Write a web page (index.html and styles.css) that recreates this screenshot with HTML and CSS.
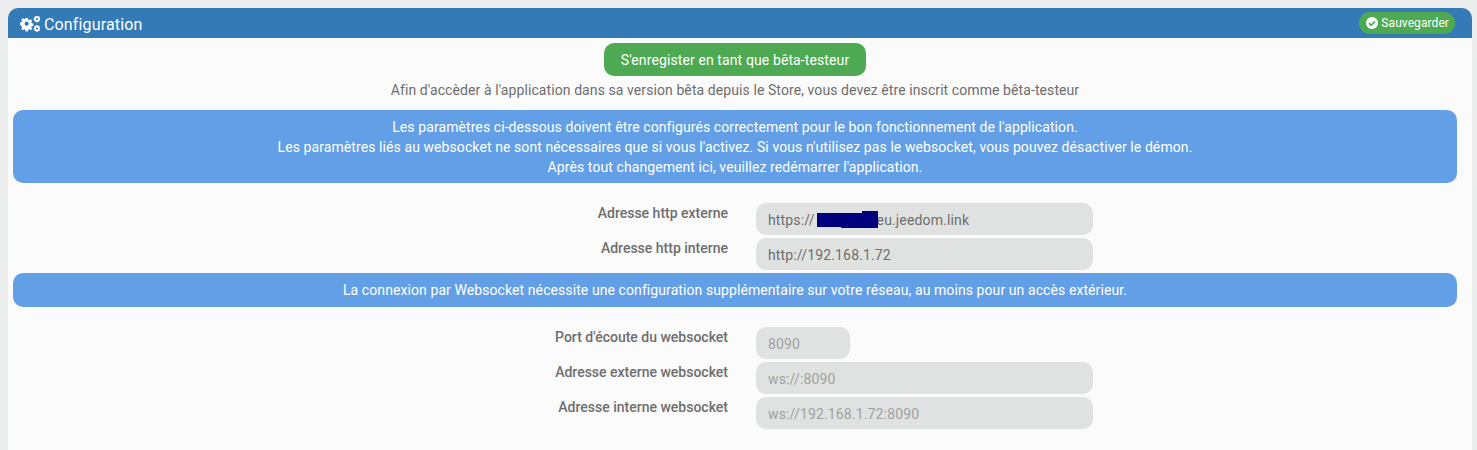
FILE: index.html
```html
<!DOCTYPE html>
<html lang="fr">
<head>
<meta charset="utf-8">
<title>Configuration</title>
<link rel="stylesheet" href="styles.css">
</head>
<body>
<main class="panel">
  <header class="panel-head">
    <h1 class="panel-title">
      <svg class="cogs" viewBox="0 0 20 16" width="20" height="16" aria-hidden="true">
        <defs>
          <path id="cog-small" fill-rule="evenodd" d="M15.300.4h1.400l.2 1 .6.3.9-.5.9.9-.5.9.3.6 1 .2v1.400l-1 .2-.3.6.5.9-.9.9-.9-.5-.6.3-.2 1h-1.400l-.2-1-.6-.3-.9.5-.9-.9.5-.9-.3-.6-1-.2V3.800l1-.2.3-.6-.5-.9.9-.9.9.5.6-.3zM16 3.200a1.300 1.300 0 1 0 0 2.600 1.300 1.300 0 0 0 0-2.600z"/>
        </defs>
        <g fill="#fff">
          <path transform="translate(-.6 -.6)" fill-rule="evenodd" d="M6.200 2.600h2.200l.4 1.700 1 .4 1.500-.9 1.500 1.500-.9 1.500.4 1 1.700.4v2.200l-1.700.4-.4 1 .9 1.500-1.500 1.500-1.500-.9-1 .4-.4 1.700H6.200l-.4-1.700-1-.4-1.500.9-1.500-1.500.9-1.500-.4-1L.6 9.400V7.200l1.700-.4.4-1-.9-1.500 1.500-1.500 1.500.9 1-.4zM7.300 6.200a2.100 2.100 0 1 0 0 4.200 2.100 2.100 0 0 0 0-4.200z"/>
          <use href="#cog-small" transform="translate(17 3) scale(.86) translate(-16 -4.500)"/>
          <use href="#cog-small" transform="translate(17 12.500) scale(.86) translate(-16 -4.500)"/>
        </g>
      </svg>
      <span class="panel-title-text">Configuration</span>
    </h1>
    <button class="save" type="button">
      <svg viewBox="0 0 12 12" width="12" height="12" aria-hidden="true">
        <circle cx="6" cy="6" r="6" fill="#fff"/>
        <path d="M3 6.200 5.100 8.300 9 4.300" fill="none" stroke="#4eaa52" stroke-width="1.700"/>
      </svg>
      Sauvegarder
    </button>
  </header>
  <div class="panel-body">
    <div class="beta">
      <button class="beta-btn" type="button">S'enregister en tant que bêta-testeur</button>
      <p class="beta-note">Afin d'accèder à l'application dans sa version bêta depuis le Store, vous devez être inscrit comme bêta-testeur</p>
    </div>
    <div class="notice">
      Les paramètres ci-dessous doivent être configurés correctement pour le bon fonctionnement de l'application.<br>
      Les paramètres liés au websocket ne sont nécessaires que si vous l'activez. Si vous n'utilisez pas le websocket, vous pouvez désactiver le démon.<br>
      Après tout changement ici, veuillez redémarrer l'application.
    </div>
    <form class="form form-http">
      <label class="label">Adresse http externe</label>
      <div class="field">
        https://<span class="gap"></span>eu.jeedom.link
        <svg class="redact" viewBox="0 0 61 17" width="61" height="17" aria-hidden="true"><path d="M0 2H45V0H61V17H24V16H0z" fill="#00007f"/></svg>
      </div>
      <label class="label">Adresse http interne</label>
      <div class="field">http://192.168.1.72</div>
    </form>
    <div class="notice notice-single">La connexion par Websocket nécessite une configuration supplémentaire sur votre réseau, au moins pour un accès extérieur.</div>
    <form class="form form-ws">
      <label class="label">Port d'écoute du websocket</label>
      <div class="field field-short placeholder">8090</div>
      <label class="label">Adresse externe websocket</label>
      <div class="field placeholder">ws://:8090</div>
      <label class="label">Adresse interne websocket</label>
      <div class="field placeholder">ws://192.168.1.72:8090</div>
    </form>
  </div>
</main>
</body>
</html>
```

FILE: styles.css
```css
* { box-sizing: border-box; }
html, body { height: 100%; }
body {
  margin: 0;
  padding: 8px 5px 0 8px;
  background: #eceeed;
  font-family: Roboto, "Liberation Sans", sans-serif;
  font-size: 14px;
  letter-spacing: .085px;
  color: #6e6e6e;
  overflow: hidden;
}
.panel {
  background: #fbfbfb;
  border-radius: 10px 10px 0 0;
  height: 442px;
}
.panel-head {
  display: flex;
  align-items: center;
  justify-content: space-between;
  height: 30px;
  padding: 0 17px 0 12px;
  background: #337ab7;
  border-radius: 10px 10px 0 0;
}
.panel-title {
  display: flex;
  align-items: center;
  gap: 4px;
  margin: 0;
  padding-top: 2px;
  color: #fff;
  font-size: 16px;
  font-weight: 400;
  letter-spacing: .15px;
}
.save {
  display: flex;
  align-items: center;
  gap: 3px;
  height: 22px;
  padding: 0 6px 0 7px;
  border: 0;
  border-radius: 11px;
  background: #4eaa52;
  color: #fff;
  font: 12px Roboto, sans-serif;
  letter-spacing: .08px;
}
.panel-body { padding: 5px 15px 0 5px; }
.beta { text-align: center; }
.beta-btn {
  height: 33px;
  width: 262px;
  border: 0;
  border-radius: 10px;
  background: #4eaa52;
  color: #fff;
  font: 14px Roboto, sans-serif;
  letter-spacing: .11px;
}
.beta-note { margin: 4px 0 0; line-height: 20px; }
.notice {
  margin-top: 10px;
  padding: 7px 10px 6px;
  border-radius: 10px;
  background: #639fe6;
  color: #fff;
  text-align: center;
  line-height: 20px;
}
.notice-single { margin-top: 3px; padding: 7px 10px; }
.form {
  display: grid;
  grid-template-columns: 715px 337px;
  column-gap: 28px;
  row-gap: 3px;
}
.form-http { margin-top: 20px; }
.form-ws { margin-top: 20px; }
.label {
  padding-top: 2px;
  text-align: right;
  font-weight: 500;
  line-height: 17px;
  letter-spacing: 0;
}
.field {
  position: relative;
  height: 32px;
  padding: 0 12px;
  border-radius: 10px;
  background: #e0e2e1;
  line-height: 34px;
  letter-spacing: .15px;
}
.field-short { width: 94px; }
.placeholder { color: #a0a0a0; }
.gap { display: inline-block; width: 62px; }
.redact { position: absolute; left: 61px; top: 8px; }
```
